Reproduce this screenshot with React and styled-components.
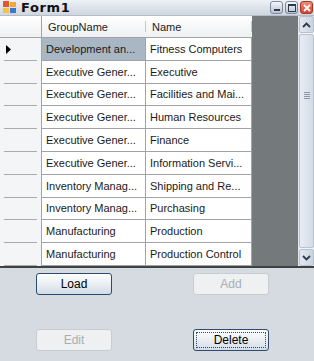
import styled, { createGlobalStyle } from 'styled-components';

const GlobalStyle = createGlobalStyle`
  html, body {
    margin: 0;
    padding: 0;
    background: #d6dbe2;
  }
  * {
    box-sizing: border-box;
  }
`;

const rows = [
  ['Development an...', 'Fitness Computers'],
  ['Executive Gener...', 'Executive'],
  ['Executive Gener...', 'Facilities and Mai...'],
  ['Executive Gener...', 'Human Resources'],
  ['Executive Gener...', 'Finance'],
  ['Executive Gener...', 'Information Servi...'],
  ['Inventory Manag...', 'Shipping and Re...'],
  ['Inventory Manag...', 'Purchasing'],
  ['Manufacturing', 'Production'],
  ['Manufacturing', 'Production Control'],
];

const App = () => {
  return (
    <Window>
      <GlobalStyle />
      <TitleBar>
        <FormIcon width="14" height="13" viewBox="0 0 14 13">
          <rect x="0" y="0" width="6" height="6" fill="#e8542e" />
          <rect x="7" y="1" width="6" height="5" fill="#f2a73a" />
          <rect x="0" y="7" width="6" height="5" fill="#f5c04a" />
          <rect x="7" y="7" width="6" height="5" fill="#3a78c9" />
        </FormIcon>
        <Title>Form1</Title>
        <Controls>
          <CtrlButton>
            <svg width="8" height="8" viewBox="0 0 8 8">
              <rect x="1" y="5" width="6" height="2" fill="#2d3b4d" />
            </svg>
          </CtrlButton>
          <CtrlButton>
            <svg width="8" height="8" viewBox="0 0 8 8">
              <rect x="0.5" y="0.5" width="7" height="7" fill="none" stroke="#2d3b4d" />
              <rect x="0.5" y="0.5" width="7" height="1.5" fill="#2d3b4d" />
            </svg>
          </CtrlButton>
          <CloseButton>
            <svg width="8" height="8" viewBox="0 0 8 8">
              <path d="M1 1 L7 7 M7 1 L1 7" stroke="#fff" strokeWidth="1.8" />
            </svg>
          </CloseButton>
        </Controls>
      </TitleBar>

      <GridView>
        <Table>
          <HeaderCorner />
          <HeaderCell>GroupName</HeaderCell>
          <HeaderCell>Name</HeaderCell>
          {rows.map((r, i) => (
            <Row key={i}>
              <RowHeader>
                {i === 0 && (
                  <svg width="5" height="9" viewBox="0 0 5 9">
                    <path d="M0 0 L5 4.5 L0 9 Z" fill="#000" />
                  </svg>
                )}
              </RowHeader>
              <Cell $selected={i === 0}>{r[0]}</Cell>
              <Cell>{r[1]}</Cell>
            </Row>
          ))}
        </Table>
        <Empty />
        <ScrollBar>
          <ArrowButton>
            <svg width="9" height="6" viewBox="0 0 9 6">
              <path d="M1 5 L4.5 1.5 L8 5" fill="none" stroke="#2d3b4d" strokeWidth="1.8" />
            </svg>
          </ArrowButton>
          <Thumb>
            <Grip>
              <span />
              <span />
              <span />
              <span />
            </Grip>
          </Thumb>
          <ArrowButton>
            <svg width="9" height="6" viewBox="0 0 9 6">
              <path d="M1 1 L4.5 4.5 L8 1" fill="none" stroke="#2d3b4d" strokeWidth="1.8" />
            </svg>
          </ArrowButton>
        </ScrollBar>
      </GridView>

      <ButtonPanel>
        <Button>Load</Button>
        <Button disabled>Add</Button>
        <Button disabled>Edit</Button>
        <Button $focused>Delete</Button>
      </ButtonPanel>
    </Window>
  );
};

export default App;

const Window = styled.div`
  width: 314px;
  height: 361px;
  display: flex;
  flex-direction: column;
  background: #d6dbe2;
  font-family: 'Liberation Sans', Arial, sans-serif;
  overflow: hidden;
`;

const TitleBar = styled.div`
  height: 16px;
  display: flex;
  align-items: center;
  padding-left: 3px;
  background: linear-gradient(#eef1f5, #cfd6df);
  border-bottom: 1px solid #b4bcc7;
`;

const FormIcon = styled.svg`
  flex: none;
`;

const Title = styled.div`
  margin-left: 4px;
  font-family: 'DejaVu Sans', 'Liberation Sans', sans-serif;
  font-size: 13px;
  font-weight: bold;
  color: #111;
  letter-spacing: 0.6px;
`;

const Controls = styled.div`
  margin-left: auto;
  display: flex;
  gap: 2px;
  padding-right: 1px;
`;

const CtrlButton = styled.div`
  width: 13px;
  height: 13px;
  display: flex;
  align-items: center;
  justify-content: center;
  border: 1px solid #7d8a9c;
  border-radius: 3px;
  background: linear-gradient(#f4f6f9, #b9c3d1);
`;

const CloseButton = styled(CtrlButton)`
  border-color: #a83a2c;
  background: linear-gradient(#f28a76, #d9402b);
`;

const GridView = styled.div`
  height: 252px;
  display: flex;
  background: #747a7c;
  border-bottom: 2px solid #3e4244;
`;

const Table = styled.div`
  display: grid;
  grid-template-columns: 42px 104px 106px;
  grid-template-rows: 22px;
  grid-auto-rows: 22.8px;
  align-content: start;
  background: #747a7c;
`;

const HeaderCorner = styled.div`
  background: linear-gradient(#ffffff, #eef0f2);
  border-right: 1px solid #a0a4a8;
  border-bottom: 1px solid #a0a4a8;
`;

const HeaderCell = styled.div`
  display: flex;
  align-items: center;
  padding-left: 6px;
  font-size: 11px;
  color: #222;
  background: linear-gradient(#ffffff, #eef0f2);
  border-bottom: 1px solid #a0a4a8;
  position: relative;

  &::after {
    content: '';
    position: absolute;
    right: 0;
    top: 5px;
    bottom: 5px;
    width: 1px;
    background: #c4c8cc;
  }
`;

const Row = styled.div`
  display: contents;
`;

const RowHeader = styled.div`
  display: flex;
  align-items: center;
  padding-left: 6px;
  background: #f4f5f6;
  border-right: 1px solid #a0a4a8;
  position: relative;

  &::after {
    content: '';
    position: absolute;
    left: 4px;
    right: 4px;
    bottom: 0;
    height: 1px;
    background: #a8acb0;
  }
`;

const Cell = styled.div`
  display: flex;
  align-items: center;
  padding-left: 4px;
  font-size: 11px;
  color: #1a1a1a;
  white-space: nowrap;
  overflow: hidden;
  background: ${p => (p.$selected ? '#a9b6c4' : '#ffffff')};
  border-right: 1px solid #a0a4a8;
  border-bottom: 1px solid #a0a4a8;
`;

const Empty = styled.div`
  flex: 1;
`;

const ScrollBar = styled.div`
  width: 16px;
  display: flex;
  flex-direction: column;
  background: #f1f3f6;
  border-left: 1px solid #e4e8ed;
`;

const ArrowButton = styled.div`
  height: 17px;
  display: flex;
  align-items: center;
  justify-content: center;
  background: linear-gradient(90deg, #e3e9f1, #c9d3e0);
  border: 1px solid #b5c1d1;
  border-radius: 2px;
`;

const Thumb = styled.div`
  flex: 1;
  margin: 1px 0;
  display: flex;
  align-items: flex-start;
  justify-content: center;
  padding-top: 57px;
  background: linear-gradient(90deg, #e8edf4, #d3dbe6);
  border: 1px solid #b8c3d2;
  border-radius: 2px;
`;

const Grip = styled.div`
  display: flex;
  flex-direction: column;
  gap: 1px;

  span {
    display: block;
    width: 6px;
    height: 1px;
    background: #8c98a8;
  }
`;

const ButtonPanel = styled.div`
  display: grid;
  grid-template-columns: 76px 76px;
  column-gap: 81px;
  row-gap: 34px;
  padding: 5px 0 0 36px;
`;

const Button = styled.button`
  height: 22px;
  padding: 0;
  font-family: 'Liberation Sans', Arial, sans-serif;
  font-size: 12px;
  color: #000;
  border: 1px solid #2e4a6e;
  border-radius: 3px;
  background: linear-gradient(#ffffff, #e6ebf1 60%, #d3dbe5);
  position: relative;

  ${p =>
    p.$focused &&
    `
    &::after {
      content: '';
      position: absolute;
      inset: 2px;
      border: 1px dotted #2e4a6e;
      border-radius: 1px;
    }
  `}

  &:disabled {
    color: #a9aeb4;
    border-color: #c9cdd2;
    background: #eef0f2;
  }
`;
